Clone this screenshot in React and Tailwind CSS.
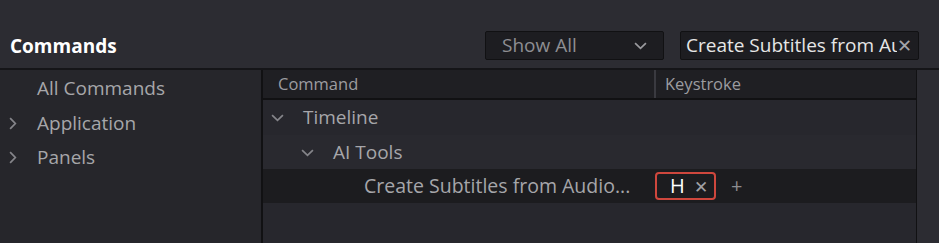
export default function App() {
  const Chev = ({ dir = "down", className = "" }) => (
    <svg width="13" height="13" viewBox="0 0 12 12" className={className} fill="none" stroke="currentColor" strokeWidth="1.6">
      {dir === "down" ? <path d="M1 3.8 L6 8.6 L11 3.8" /> : <path d="M3.8 1 L8.6 6 L3.8 11" />}
    </svg>
  );
  return (
    <div className="w-[939px] h-[243px] bg-[#2c2c32] flex flex-col font-['Open_Sans',sans-serif] overflow-hidden">
      <div className="h-[70px] shrink-0 flex items-center pt-[22px] pl-[10px] border-b-2 border-[#151518]">
        <div className="text-[19px] font-bold text-white leading-none mt-[2px]">Commands</div>
        <div className="ml-auto flex items-center gap-[16px] mr-[20px]">
          <div className="w-[179px] h-[29px] bg-[#1d1d21] border border-[#111113] rounded-[2px] flex items-center pl-[16px] pr-[16px] text-[19px] text-[#8e8e92]">
            <span>Show All</span>
            <Chev className="ml-auto text-[#9a9a9e]" />
          </div>
          <div className="w-[239px] h-[29px] bg-[#1d1d21] border border-[#111113] rounded-[2px] flex items-center pl-[5px] pr-[6px] text-[19px] text-[#e6e6e6] overflow-hidden">
            <span className="whitespace-nowrap overflow-hidden w-[214px]">Create Subtitles from Audio</span>
            <span className="ml-auto text-[#a5a5a8] text-[18px] leading-none">✕</span>
          </div>
        </div>
      </div>
      <div className="flex flex-1">
        <div className="w-[263px] bg-[#26262b] border-r-2 border-[#111113] pt-[1px] text-[19px] text-[#a6a6aa]">
          <div className="h-[35px] flex items-center pl-[37px]">All Commands</div>
          <div className="h-[34px] flex items-center pl-[6px]">
            <Chev dir="right" className="text-[#85858a] mr-[18px]" />
            Application
          </div>
          <div className="h-[35px] flex items-center pl-[6px]">
            <Chev dir="right" className="text-[#85858a] mr-[18px]" />
            Panels
          </div>
        </div>
        <div className="w-[654px] bg-[#27272d] border-r border-[#111113] flex flex-col">
          <div className="h-[30px] bg-[#1f1f23] border-b-2 border-[#111113] flex text-[16.5px] text-[#9c9ca0]">
            <div className="w-[393px] flex items-center pl-[15px] border-r-2 border-[#3a3a40]">Command</div>
            <div className="flex items-center pl-[9px]">Keystroke</div>
          </div>
          <div className="h-[35px] bg-[#27272d] flex items-center pl-[8px] text-[19px] text-[#a6a6aa]">
            <Chev className="text-[#85858a] mr-[19px]" />
            Timeline
          </div>
          <div className="h-[34px] bg-[#29292f] flex items-center pl-[38px] text-[19px] text-[#a6a6aa]">
            <Chev className="text-[#85858a] mr-[19px]" />
            AI Tools
          </div>
          <div className="h-[34px] bg-[#1c1c1f] flex items-center text-[19px] text-[#a6a6aa]">
            <div className="w-[392px] pl-[101px] whitespace-nowrap text-[19.5px]">Create Subtitles from Audio...</div>
            <div className="w-[61px] h-[28px] border-2 border-[#cf473d] rounded-[4px] flex items-center pl-[13px] pr-[6px]">
              <span className="text-white text-[20px] leading-none">H</span>
              <span className="ml-auto text-[#a0a0a4] text-[17px] leading-none">✕</span>
            </div>
            <span className="ml-[15px] text-[#8c8c90] text-[20px]">+</span>
          </div>
          <div className="flex-1 bg-[#27272d]" />
        </div>
        <div className="flex-1" />
      </div>
    </div>
  );
}
